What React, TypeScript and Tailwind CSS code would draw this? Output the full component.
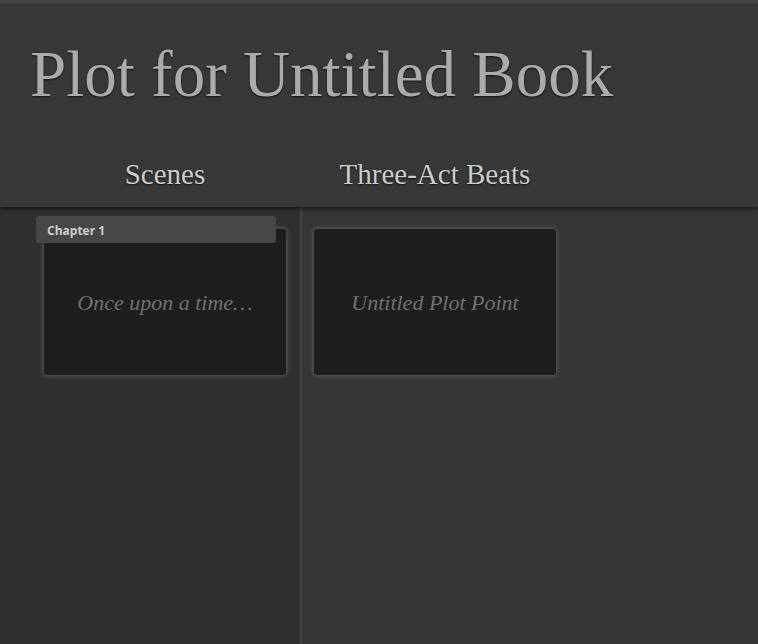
import React from 'react';

const serif = { fontFamily: '"Liberation Serif", "DejaVu Serif", serif' };

const Card: React.FC<{ text: string; label?: string; className?: string }> = ({ text, label, className }) => (
  <div
    className={`relative mt-[22px] h-[146px] w-[242px] rounded-[3px] bg-[#1e1e1e] shadow-[0_0_4px_1px_rgba(110,110,110,0.7)] flex items-center justify-center ${className ?? ''}`}
  >
    {label && (
      <div
        className="absolute left-[-8px] top-[-13px] h-[27px] w-[240px] rounded-[3px] bg-[#474747] px-[11px] pt-[6px] text-[12px] font-bold text-[#cfcfcf]"
        style={{ fontFamily: '"Open Sans", "Noto Sans", sans-serif' }}
      >
        {label}
      </div>
    )}
    <span className="text-[22px] italic text-[#717171]" style={serif}>
      {text}
    </span>
  </div>
);

const App: React.FC = () => {
  return (
    <div className="h-[644px] w-[758px] overflow-hidden flex flex-col bg-[#363636]">
      <header className="relative z-10 h-[207px] border-t-[3px] border-[#454545] bg-[#383838] shadow-[0_2px_4px_rgba(0,0,0,0.55)] flex flex-col">
        <h1
          className="pl-[30px] pt-[35px] text-[65px] leading-[72px] text-[#ababab] [text-shadow:0_1px_2px_#111]"
          style={serif}
        >
          Plot for Untitled Book
        </h1>
        <div className="flex pl-[30px] pt-[43px]">
          <div className="w-[270px] text-center text-[29px] text-[#cccccc] [text-shadow:0_1px_2px_#111]" style={serif}>
            Scenes
          </div>
          <div className="w-[270px] text-center text-[29px] text-[#cccccc] [text-shadow:0_1px_2px_#111]" style={serif}>
            Three-Act Beats
          </div>
        </div>
      </header>
      <main className="flex flex-1">
        <section className="w-[302px] border-r-2 border-[#454545] bg-[#303030] pl-[44px]">
          <Card text="Once upon a time…" label="Chapter 1" />
        </section>
        <section className="flex-1 bg-[#363636] pl-[12px]">
          <Card text="Untitled Plot Point" />
        </section>
      </main>
    </div>
  );
};

export default App;
